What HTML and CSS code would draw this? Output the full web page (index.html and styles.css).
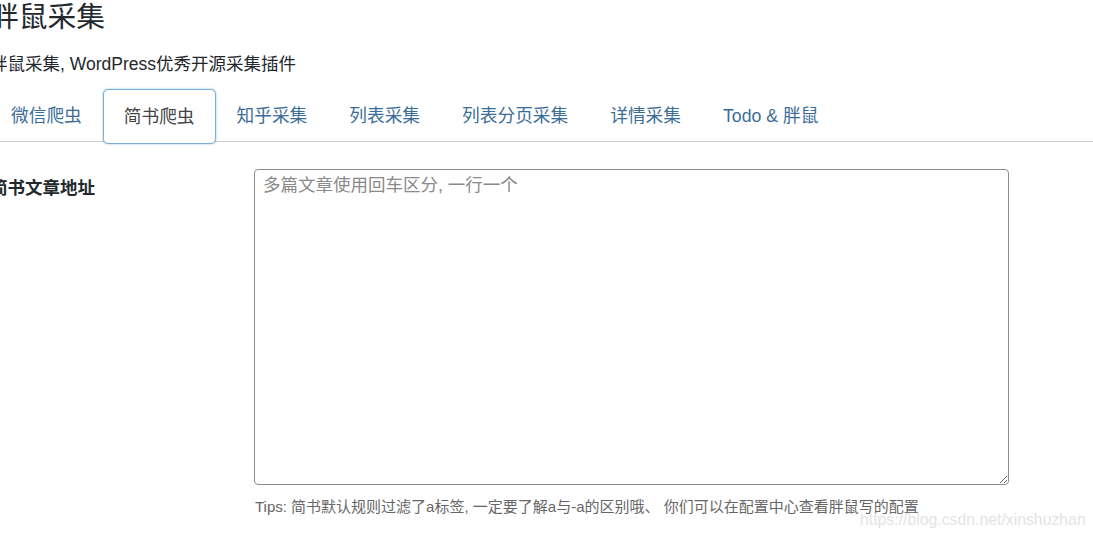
FILE: index.html
```html
<!DOCTYPE html>
<html lang="zh-CN">
<head>
    <meta charset="UTF-8">
    <meta name="viewport" content="width=device-width, initial-scale=1.0">
    <title>胖鼠采集</title>
    <link rel="stylesheet" href="styles.css">
</head>
<body>
    <div class="wrap">
        <h1 class="page-title">胖鼠采集</h1>
        <p class="page-desc">胖鼠采集, WordPress优秀开源采集插件</p>

        <div class="nav-tab-wrapper">
            <a class="nav-tab" href="#">微信爬虫</a>
            <a class="nav-tab nav-tab-active" href="#">简书爬虫</a>
            <a class="nav-tab" href="#">知乎采集</a>
            <a class="nav-tab" href="#">列表采集</a>
            <a class="nav-tab" href="#">列表分页采集</a>
            <a class="nav-tab" href="#">详情采集</a>
            <a class="nav-tab" href="#">Todo &amp; 胖鼠</a>
        </div>

        <div class="form-row">
            <label class="form-label" for="jianshuUrls">简书文章地址</label>
            <div class="form-field">
                <textarea id="jianshuUrls" class="url-box" placeholder="多篇文章使用回车区分, 一行一个"></textarea>
                <p class="description">Tips: 简书默认规则过滤了a标签, 一定要了解a与-a的区别哦、 你们可以在配置中心查看胖鼠写的配置</p>
            </div>
        </div>
    </div>

    <div class="watermark">https://blog.csdn.net/xinshuzhan</div>
</body>
</html>
```

FILE: styles.css
```css
body {
    margin: 0;
    background: #fff;
    font-family: "Liberation Sans", Arial, "Noto Sans CJK SC", sans-serif;
    color: #333;
    overflow: hidden;
}
.wrap {
    margin-left: -10px;
}
.page-title {
    margin: 0;
    font-size: 28.75px;
    font-weight: 400;
    line-height: 34px;
    color: #23282d;
}
.page-desc {
    margin: 12px 0 0;
    font-size: 17.5px;
    line-height: 36px;
    color: #23282d;
}
.nav-tab-wrapper {
    display: flex;
    margin-top: 7px;
    height: 52px;
    border-bottom: 1px solid #ccc;
}
.nav-tab {
    display: flex;
    align-items: center;
    padding: 0 20px 4px;
    height: 48px;
    border: 1px solid transparent;
    border-bottom: none;
    font-size: 17.7px;
    color: #3b6d99;
    text-decoration: none;
}
.nav-tab-active {
    color: #444;
    background: #fff;
    height: 49px;
    border: 1px solid #7aaedb;
    border-radius: 5px;
    box-shadow: 0 0 2px rgba(30, 140, 190, 0.6);
}
.form-row {
    display: flex;
    margin-top: 27px;
}
.form-label {
    width: 264px;
    padding-top: 5px;
    font-size: 17.5px;
    font-weight: 700;
    color: #23282d;
}
.form-field {
    display: flex;
    flex-direction: column;
}
.url-box {
    width: 755px;
    height: 316px;
    box-sizing: border-box;
    padding: 4px 8px;
    border: 1px solid #8c8c8c;
    border-radius: 4px;
    font-family: "Liberation Sans", Arial, "Noto Sans CJK SC", sans-serif;
    font-size: 17.5px;
    line-height: 1.3;
    resize: both;
}
.url-box::placeholder {
    color: #8a8a8a;
}
.description {
    margin: 10px 0 0 1px;
    font-size: 15px;
    color: #666;
}
.watermark {
    position: absolute;
    left: 860px;
    top: 511px;
    font-size: 15.8px;
    color: #e4e4e4;
}
```
